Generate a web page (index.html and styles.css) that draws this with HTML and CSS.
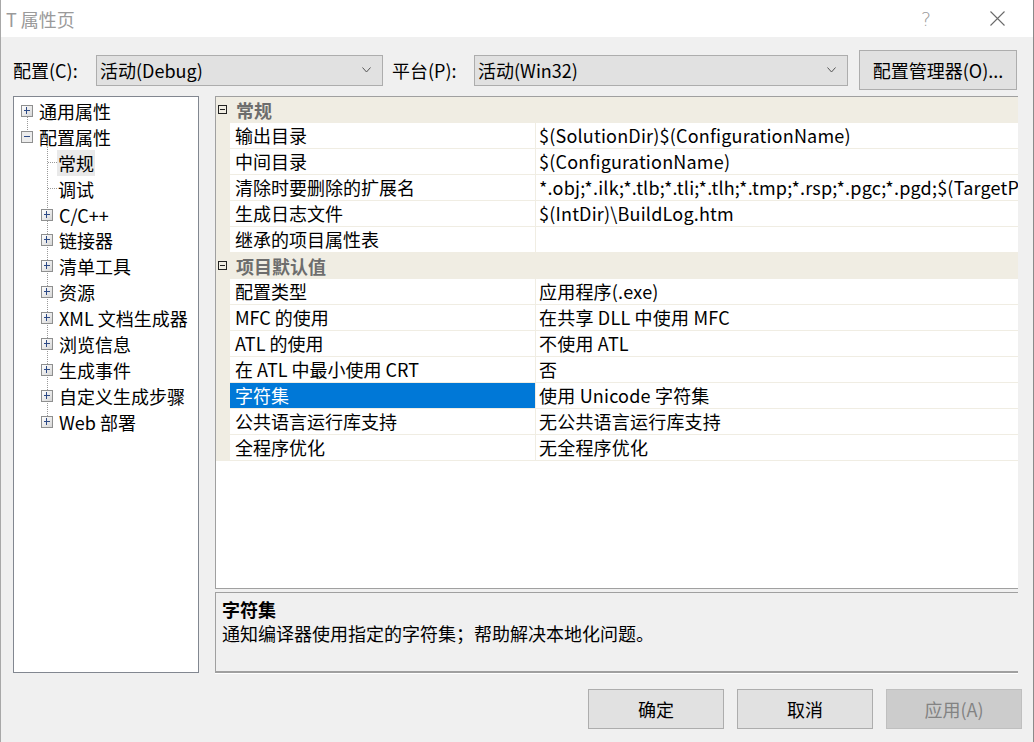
FILE: index.html
```html
<!DOCTYPE html>
<html lang="zh-CN">
<head>
	<meta charset="UTF-8">
	<title>T 属性页</title>
	<link rel="stylesheet" href="styles.css">
</head>
<body>
	<div class="dialog">
		<div class="titlebar">
			<span class="title">T 属性页</span>
			<span class="help">?</span>
			<svg class="close" width="15" height="15" viewBox="0 0 15 15"><path d="M0.5 0.5L14.5 14.5M14.5 0.5L0.5 14.5" stroke="#6a6a6a" stroke-width="1.1" fill="none"/></svg>
		</div>

		<div class="toolbar">
			<span class="field-label">配置(C):</span>
			<div class="combo combo-config">
				<span>活动(Debug)</span>
				<svg class="chevron" width="9" height="6" viewBox="0 0 9 6"><path d="M0.5 0.5L4.5 5L8.5 0.5" stroke="#555" fill="none"/></svg>
			</div>
			<span class="field-label field-platform">平台(P):</span>
			<div class="combo combo-platform">
				<span>活动(Win32)</span>
				<svg class="chevron" width="9" height="6" viewBox="0 0 9 6"><path d="M0.5 0.5L4.5 5L8.5 0.5" stroke="#555" fill="none"/></svg>
			</div>
			<div class="btn btn-manager">配置管理器(O)...</div>
		</div>

		<div class="main">
			<div class="tree">
				<div class="node root first">
					<span class="plus"></span>
					<span class="label">通用属性</span>
				</div>
				<div class="node root">
					<span class="plus minus"></span>
					<span class="label">配置属性</span>
				</div>
				<div class="children">
					<div class="node leaf"><span class="hline"></span><span class="label selected">常规</span></div>
					<div class="node leaf"><span class="hline"></span><span class="label">调试</span></div>
					<div class="node sub"><span class="plus"></span><span class="label">C/C++</span></div>
					<div class="node sub"><span class="plus"></span><span class="label">链接器</span></div>
					<div class="node sub"><span class="plus"></span><span class="label">清单工具</span></div>
					<div class="node sub"><span class="plus"></span><span class="label">资源</span></div>
					<div class="node sub"><span class="plus"></span><span class="label">XML 文档生成器</span></div>
					<div class="node sub"><span class="plus"></span><span class="label">浏览信息</span></div>
					<div class="node sub"><span class="plus"></span><span class="label">生成事件</span></div>
					<div class="node sub"><span class="plus"></span><span class="label">自定义生成步骤</span></div>
					<div class="node sub"><span class="plus"></span><span class="label">Web 部署</span></div>
				</div>
			</div>

			<div class="pane">
				<div class="grid">
					<div class="cat"><span class="cat-box"></span><span class="cat-name">常规</span></div>
					<div class="row"><span class="name">输出目录</span><span class="value">$(SolutionDir)$(ConfigurationName)</span></div>
					<div class="row"><span class="name">中间目录</span><span class="value">$(ConfigurationName)</span></div>
					<div class="row"><span class="name">清除时要删除的扩展名</span><span class="value">*.obj;*.ilk;*.tlb;*.tli;*.tlh;*.tmp;*.rsp;*.pgc;*.pgd;$(TargetPath)</span></div>
					<div class="row"><span class="name">生成日志文件</span><span class="value">$(IntDir)\BuildLog.htm</span></div>
					<div class="row"><span class="name">继承的项目属性表</span><span class="value"></span></div>
					<div class="cat"><span class="cat-box"></span><span class="cat-name">项目默认值</span></div>
					<div class="row"><span class="name">配置类型</span><span class="value">应用程序(.exe)</span></div>
					<div class="row"><span class="name">MFC 的使用</span><span class="value">在共享 DLL 中使用 MFC</span></div>
					<div class="row"><span class="name">ATL 的使用</span><span class="value">不使用 ATL</span></div>
					<div class="row"><span class="name">在 ATL 中最小使用 CRT</span><span class="value">否</span></div>
					<div class="row active"><span class="name">字符集</span><span class="value">使用 Unicode 字符集</span></div>
					<div class="row"><span class="name">公共语言运行库支持</span><span class="value">无公共语言运行库支持</span></div>
					<div class="row"><span class="name">全程序优化</span><span class="value">无全程序优化</span></div>
				</div>
				<div class="desc">
					<div class="desc-title">字符集</div>
					<div class="desc-text">通知编译器使用指定的字符集；帮助解决本地化问题。</div>
				</div>
			</div>
		</div>

		<div class="footer">
			<div class="btn btn-ok">确定</div>
			<div class="btn btn-cancel">取消</div>
			<div class="btn btn-apply">应用(A)</div>
		</div>
	</div>
</body>
</html>
```

FILE: styles.css
```css
* {
	margin: 0;
	padding: 0;
	box-sizing: border-box;
}
body {
	background: #f0f0f0;
	font-family: "Noto Sans CJK SC", "Noto Sans", sans-serif;
	font-size: 18px;
	color: #000;
}
.dialog {
	width: 1034px;
	height: 742px;
	background: #f0f0f0;
	border-left: 1px solid #a8a8a8;
	border-right: 1px solid #8a8a8a;
	overflow: hidden;
}

/* 标题栏 */
.titlebar {
	height: 37px;
	background: #fff;
	display: flex;
	align-items: center;
}
.title {
	padding-left: 5px;
	color: #9a9a9a;
	font-size: 18px;
}
.help {
	margin-left: auto;
	color: #9a9a9a;
	font-size: 19px;
	font-family: "DejaVu Sans", sans-serif;
	font-weight: 200;
}
.close {
	margin: 0 28px 0 59px;
}

/* 配置 / 平台 */
.toolbar {
	display: flex;
	align-items: center;
	height: 59px;
	padding: 13px 0 6px 12px;
}
.field-label {
	width: 83px;
	line-height: 40px;
}
.field-platform {
	margin-left: 9px;
	width: 82px;
}
.combo {
	height: 31px;
	background: #e1e1e1;
	border: 1px solid #adadad;
	display: flex;
	align-items: center;
	padding-left: 3px;
}
.combo-config {
	width: 287px;
}
.combo-platform {
	width: 374px;
}
.chevron {
	margin-left: auto;
	margin-right: 11px;
}
.btn {
	background: #e1e1e1;
	border: 1px solid #adadad;
	height: 40px;
	display: flex;
	align-items: center;
	justify-content: center;
}
.btn-manager {
	margin-left: 11px;
	width: 158px;
}

/* 主体 */
.main {
	display: flex;
	gap: 16px;
	padding-left: 12px;
	height: 577px;
}
.tree {
	width: 186px;
	height: 577px;
	background: #fff;
	border: 1px solid #828790;
	padding-top: 1px;
}
.node {
	height: 25.9px;
	display: flex;
	align-items: center;
	position: relative;
}
.node .label {
	line-height: 26px;
	padding: 0 1px;
	white-space: nowrap;
}
.root {
	padding-left: 7px;
}
.root .plus {
	margin-right: 5px;
}
.root.first::after {
	content: "";
	position: absolute;
	left: 13px;
	top: 19px;
	height: 13px;
	border-left: 1px dotted #9a9a9a;
}
.children {
	position: relative;
}
.children::before {
	content: "";
	position: absolute;
	left: 33px;
	top: -7px;
	bottom: 13px;
	border-left: 1px dotted #9a9a9a;
}
.leaf {
	padding-left: 34px;
}
.hline {
	width: 9px;
	border-top: 1px dotted #9a9a9a;
}
.selected {
	background: #e9e9e9;
}
.sub {
	padding-left: 27px;
}
.plus {
	width: 12px;
	height: 12px;
	margin-right: 5px;
	border: 1px solid #8e8f8f;
	background: linear-gradient(135deg, #fff, #d6d6d6);
	position: relative;
	z-index: 1;
}
.plus::before,
.plus::after {
	content: "";
	position: absolute;
	background: #2d4a86;
}
.plus::before {
	left: 2px;
	top: 4px;
	width: 6px;
	height: 1px;
}
.plus::after {
	left: 4px;
	top: 1px;
	width: 1px;
	height: 7px;
}
.minus {
	background: #ececec;
}
.minus::after {
	display: none;
}

/* 属性表格 */
.pane {
	width: 803px;
	display: flex;
	flex-direction: column;
}
.grid {
	height: 494px;
	background: #fff;
	border-top: 1px solid #a0a0a0;
	border-left: 1px solid #a0a0a0;
	border-bottom: 1px solid #a0a0a0;
	overflow: hidden;
}
.cat {
	height: 26px;
	background: #f0ede3;
	display: flex;
	align-items: center;
	border-bottom: 1px solid #f0ede3;
}
.cat-box {
	width: 9px;
	height: 9px;
	border: 1px solid #222;
	margin-left: 2px;
	position: relative;
}
.cat-box::after {
	content: "";
	position: absolute;
	left: 1px;
	top: 3px;
	width: 5px;
	height: 1px;
	background: #222;
}
.cat-name {
	margin-left: 9px;
	font-weight: bold;
	color: #6d6d6d;
}
.row {
	height: 26px;
	display: flex;
	border-left: 14px solid #f0ede3;
	border-bottom: 1px solid #f0ede3;
}
.row .name {
	width: 306px;
	padding-left: 5px;
	line-height: 25px;
	border-right: 1px solid #f0ede3;
	white-space: nowrap;
}
.row .value {
	flex: 1;
	padding-left: 3px;
	line-height: 25px;
	white-space: nowrap;
	overflow: hidden;
	letter-spacing: 0.2px;
}
.row.active .name {
	background: #0078d7;
	color: #fff;
}

/* 说明 */
.desc {
	margin-top: 3px;
	height: 81px;
	border-top: 1px solid #a0a0a0;
	border-left: 1px solid #a0a0a0;
	border-bottom: 2px solid #a0a0a0;
	padding: 4px 0 0 6px;
	line-height: 24px;
	box-shadow: 0 1px 0 #fff;
}
.desc-title {
	font-weight: bold;
}

/* 底部按钮 */
.footer {
	display: flex;
	justify-content: flex-end;
	gap: 13px;
	padding: 16px 11px 0 0;
}
.footer .btn {
	width: 136px;
}
.btn-apply {
	background: #cccccc;
	border-color: #bfbfbf;
	color: #838383;
}
```
